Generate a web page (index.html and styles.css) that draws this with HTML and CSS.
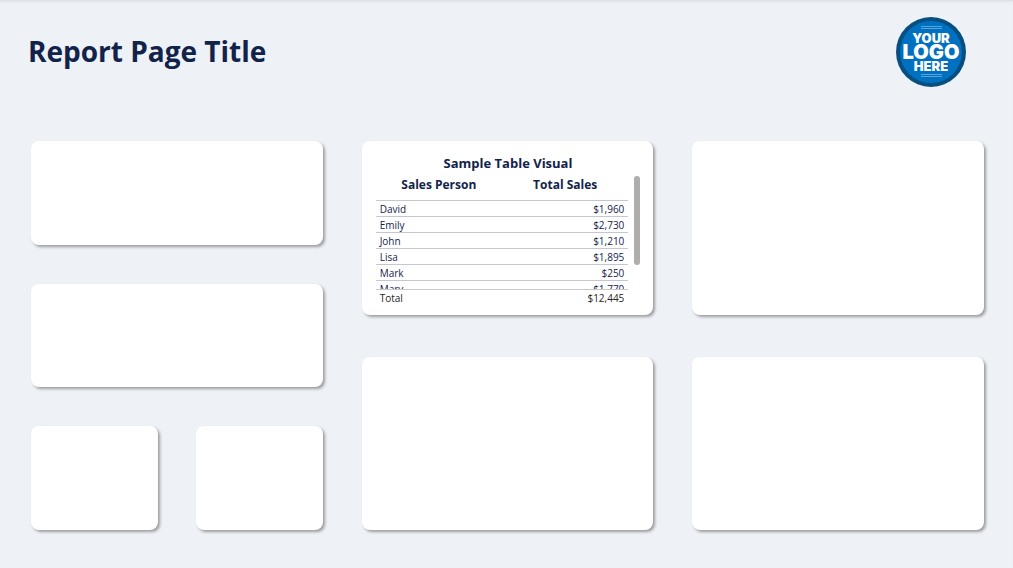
FILE: index.html
```html
<!DOCTYPE html>
<html lang="en">
<head>
  <meta charset="UTF-8">
  <title>Report Page Title</title>
  <link rel="stylesheet" href="styles.css">
</head>
<body>
  <!-- Page header -->
  <header class="page-header">
    <h1>Report Page Title</h1>
    <svg class="logo" viewBox="0 0 70 70" role="img" aria-label="Your logo here">
      <circle class="logo-ring" cx="35" cy="35" r="35" />
      <circle class="logo-face" cx="35" cy="35" r="31" />
      <path class="logo-lines" d="M25 9.5h21M25 11.5h21M25 57.500h21M25 59.500h21" />
      <text class="logo-small" x="35" y="26">YOUR</text>
      <text class="logo-big" x="35" y="42">LOGO</text>
      <text class="logo-small" x="35" y="54">HERE</text>
    </svg>
  </header>

  <!-- Visuals -->
  <main class="report">
    <div class="column column-left">
      <section class="card"></section>
      <section class="card"></section>
      <div class="card-pair">
        <section class="card"></section>
        <section class="card"></section>
      </div>
    </div>

    <div class="column">
      <section class="card table-card">
        <h2>Sample Table Visual</h2>
        <div class="table-wrap">
          <table class="sales">
            <thead>
              <tr><th>Sales Person</th><th>Total Sales</th></tr>
            </thead>
            <tbody>
              <tr><td>David</td><td>$1,960</td></tr>
              <tr><td>Emily</td><td>$2,730</td></tr>
              <tr><td>John</td><td>$1,210</td></tr>
              <tr><td>Lisa</td><td>$1,895</td></tr>
              <tr><td>Mark</td><td>$250</td></tr>
              <tr><td>Mary</td><td>$1,770</td></tr>
            </tbody>
            <tfoot>
              <tr><td>Total</td><td>$12,445</td></tr>
            </tfoot>
          </table>
          <div class="scroll-thumb"></div>
        </div>
      </section>
      <section class="card"></section>
    </div>

    <div class="column">
      <section class="card"></section>
      <section class="card"></section>
    </div>
  </main>
</body>
</html>
```
FILE: styles.css
```css
* {
  box-sizing: border-box;
}
body {
  margin: 0;
  min-height: 100vh;
  display: flex;
  flex-direction: column;
  font-family: "Segoe UI", "Open Sans", "Noto Sans", sans-serif;
  color: #12234a;
  background: #eef1f6;
  box-shadow: inset 0 3px 3px -2px #d5d9df;
}
/* Header */
.page-header {
  display: flex;
  justify-content: space-between;
  align-items: flex-start;
  padding: 17px 47px 17px 28px;
}
.page-header h1 {
  margin: 0;
  font-size: 28px;
  line-height: 68px;
  font-weight: 700;
}
.logo {
  width: 70px;
  height: 70px;
}
.logo-ring {
  fill: #064f80;
}
.logo-face {
  fill: #0070c0;
}
.logo-lines {
  stroke: #5ba3d9;
  stroke-width: 1;
}
.logo text {
  fill: #fff;
  font-family: Inter, sans-serif;
  font-weight: 900;
  text-anchor: middle;
}
.logo .logo-small {
  font-size: 13px;
}
.logo .logo-big {
  font-size: 20px;
}
/* Three equal columns of cards */
.report {
  flex: 1;
  display: grid;
  grid-template-columns: repeat(3, minmax(0, 1fr));
  gap: 39px;
  padding: 37px 29px 38px 31px;
}
.column {
  display: grid;
  grid-auto-rows: 1fr;
  gap: 42px;
}
.column-left {
  gap: 39px;
}
.card-pair {
  display: flex;
  gap: 38px;
}
.card-pair .card {
  flex: 1;
}
.card {
  background: #fff;
  border-radius: 8px;
  box-shadow: 2px 2px 3px rgba(0, 0, 0, 0.35);
}
/* Table visual */
.table-card {
  padding: 13px 13px 0 14px;
}
.table-card h2 {
  margin: 0;
  font-size: 13px;
  line-height: 18px;
  font-weight: 700;
  text-align: center;
}
.table-wrap {
  display: flex;
  gap: 6px;
}
.sales {
  flex: 1;
  display: block;
  font-size: 10px;
  line-height: 16px;
}
.sales thead,
.sales tbody,
.sales tfoot {
  display: block;
}
.sales tr {
  display: flex;
}
.sales th {
  flex: 1;
  padding: 0 0 2px;
  font-size: 12px;
  line-height: 26px;
  font-weight: 700;
}
.sales td {
  flex: 1;
  padding: 0 4px;
}
.sales td:last-child {
  text-align: right;
}
/* Rows past the visible height are cut off */
.sales tbody {
  height: 89px;
  overflow: hidden;
}
.sales tbody tr {
  height: 16px;
  border-top: 1px solid #c3c6d3;
}
.sales tfoot {
  color: #252423;
  border-top: 1px solid #c8c8c8;
}
.scroll-thumb {
  width: 6px;
  height: 89px;
  margin-top: 4px;
  border-radius: 3px;
  background: #b0aead;
}
```
